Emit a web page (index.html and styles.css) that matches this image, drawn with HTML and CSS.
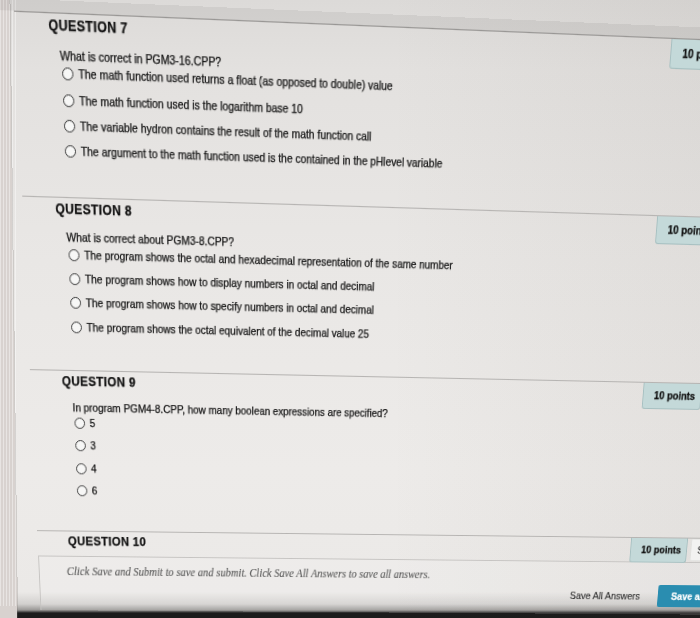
FILE: index.html
```html
<!DOCTYPE html>
<html lang="en">
<head>
    <meta charset="UTF-8">
    <meta name="viewport" content="width=device-width, initial-scale=1.0">
    <title>Take Test</title>
    <link rel="stylesheet" href="styles.css">
</head>
<body>
    <div class="screen">
        <div class="prev"></div>

        <div class="question first">
            <div class="q-head">
                <h3 class="q-label">QUESTION 7</h3>
                <div class="points">10 points</div>
                <button class="save-answer">Save Answer</button>
            </div>
            <p class="q-text">What is correct in PGM3-16.CPP?</p>
            <ul class="options">
                <li><span class="radio"></span>The math function used returns a float (as opposed to double) value</li>
                <li><span class="radio"></span>The math function used is the logarithm base 10</li>
                <li><span class="radio"></span>The variable hydron contains the result of the math function call</li>
                <li><span class="radio"></span>The argument to the math function used is the contained in the pHlevel variable</li>
            </ul>
        </div>

        <div class="question">
            <div class="q-head">
                <h3 class="q-label">QUESTION 8</h3>
                <div class="points">10 points</div>
                <button class="save-answer">Save Answer</button>
            </div>
            <p class="q-text">What is correct about PGM3-8.CPP?</p>
            <ul class="options">
                <li><span class="radio"></span>The program shows the octal and hexadecimal representation of the same number</li>
                <li><span class="radio"></span>The program shows how to display numbers in octal and decimal</li>
                <li><span class="radio"></span>The program shows how to specify numbers in octal and decimal</li>
                <li><span class="radio"></span>The program shows the octal equivalent of the decimal value 25</li>
            </ul>
        </div>

        <div class="question">
            <div class="q-head">
                <h3 class="q-label">QUESTION 9</h3>
                <div class="points">10 points</div>
                <button class="save-answer">Save Answer</button>
            </div>
            <p class="q-text">In program PGM4-8.CPP, how many boolean expressions are specified?</p>
            <ul class="options">
                <li><span class="radio"></span>5</li>
                <li><span class="radio"></span>3</li>
                <li><span class="radio"></span>4</li>
                <li><span class="radio"></span>6</li>
            </ul>
        </div>

        <div class="question last">
            <div class="q-head">
                <h3 class="q-label">QUESTION 10</h3>
                <div class="points">10 points</div>
                <button class="save-answer">Save Answer</button>
            </div>
        </div>

        <div class="submit-bar">
            <p class="submit-note">Click Save and Submit to save and submit. Click Save All Answers to save all answers.</p>
            <div class="actions">
                <button class="btn-link">Save All Answers</button>
                <button class="btn-primary">Save and Submit</button>
            </div>
        </div>
    </div>
</body>
</html>
```

FILE: styles.css
```css
html {
    height: 100%;
    overflow: hidden;
    /* photo of a monitor: striped gutter on the left, uneven light, bezel at the bottom */
    background:
        linear-gradient(89.3deg, transparent 17px, rgba(120, 115, 110, 0.25) 17px, rgba(120, 115, 110, 0.25) 18px, transparent 18px),
        repeating-linear-gradient(90deg, rgba(255, 255, 255, 0.4) 0 1px, transparent 1px 3px) 0 0 / 17px 606px no-repeat,
        linear-gradient(89.3deg, #d8d2cf 17px, transparent 17px),
        linear-gradient(to right, transparent 55%, rgba(60, 50, 40, 0.05)),
        linear-gradient(to bottom, #dcdad8 0, #e3e1df 70px, #e9e7e5 260px, #edebe9 470px, #ebe9e7 592px, #d2d0ce 604px, #9a9896 610px, #1c1c1c 613px);
}
body {
    margin: 0;
    height: 618px;
    overflow: hidden;
    font-family: "Liberation Sans", Arial, sans-serif;
    color: #141414;
}
.screen {
    width: 800px;
    transform-origin: 0 0;
    transform: matrix3d(1.050813, 0.0440238, 0, 0.0000603265, 0.0566328, 1.211896, 0, 0.000229183, 0, 0, 1, 0, -3.30476, -2.15943, 0, 1);
    -webkit-text-stroke: 0.25px currentColor;
}
.prev {
    height: 9.9px;
    background: rgba(0, 0, 0, 0.06);
}
.question {
    margin-left: 16px;
    height: 159.4px;
    box-sizing: border-box;
    border-top: 1px solid #b6b4b2;
    padding-left: 32.5px;
}
.question.first {
    border-top-color: #989694;
}
.question.last {
    height: 25.9px;
}
.q-head {
    display: flex;
    align-items: flex-start;
    height: 19px;
}
.q-label {
    flex: 0 0 620px;
    margin: 2px 0 0;
    font-size: 12px;
    line-height: 17px;
    font-weight: bold;
    letter-spacing: 0.4px;
    color: #111;
}
.points {
    flex: 0 0 65px;
    box-sizing: border-box;
    height: 26px;
    line-height: 25px;
    padding-left: 12px;
    background: #c4d9d9;
    border: 1px solid #a7c0c1;
    border-top: 0;
    border-radius: 0 0 3px 3px;
    font-size: 10.4px;
    font-weight: bold;
    color: #111;
    white-space: nowrap;
}
.save-answer {
    margin-left: 4.5px;
    height: 24px;
    padding: 0 7px;
    border: 1px solid #e2e2e0;
    border-radius: 2px;
    background: #f2f2f1;
    font-family: inherit;
    font-size: 10.4px;
    color: #333;
    white-space: nowrap;
}
.q-text {
    margin: 10px 0 1px 10px;
    font-size: 10.4px;
    line-height: 14px;
}
.options {
    list-style: none;
    margin: 0 0 0 11.5px;
    padding: 0;
}
.options li {
    display: flex;
    align-items: center;
    gap: 4.7px;
    height: 14px;
    margin-bottom: 8.3px;
    font-size: 10.4px;
    white-space: nowrap;
}
.radio {
    flex: none;
    width: 11px;
    height: 11px;
    box-sizing: border-box;
    border: 1.4px solid #3a3a3a;
    border-radius: 50%;
    background: #f7f7f6;
    -webkit-text-stroke: 0;
}
.submit-bar {
    margin-left: 16px;
    height: 57px;
    box-sizing: border-box;
    border-top: 1px solid #c6c4c2;
    border-left: 1px solid #c6c4c2;
    padding: 8.5px 0 0 29px;
    background: rgba(255, 255, 255, 0.12);
}
.submit-note {
    margin: 0;
    font-family: "Liberation Serif", "Times New Roman", serif;
    font-style: italic;
    font-size: 11.5px;
    line-height: 14px;
    color: #5e5e5e;
    -webkit-text-stroke: 0.15px currentColor;
    white-space: nowrap;
}
.actions {
    display: flex;
    align-items: center;
    gap: 20px;
    height: 24px;
    margin: 1.5px 0 0 558px;
}
.actions button {
    border: none;
    padding: 0;
    font-family: inherit;
    font-size: 10.5px;
    white-space: nowrap;
}
.btn-link {
    background: none;
    color: #2a2a2a;
    -webkit-text-stroke: 0.1px currentColor;
}
.actions .btn-primary {
    height: 24px;
    padding: 0 16px;
    border-radius: 2px;
    background: #2a8db0;
    color: #fff;
    font-weight: bold;
}
```
